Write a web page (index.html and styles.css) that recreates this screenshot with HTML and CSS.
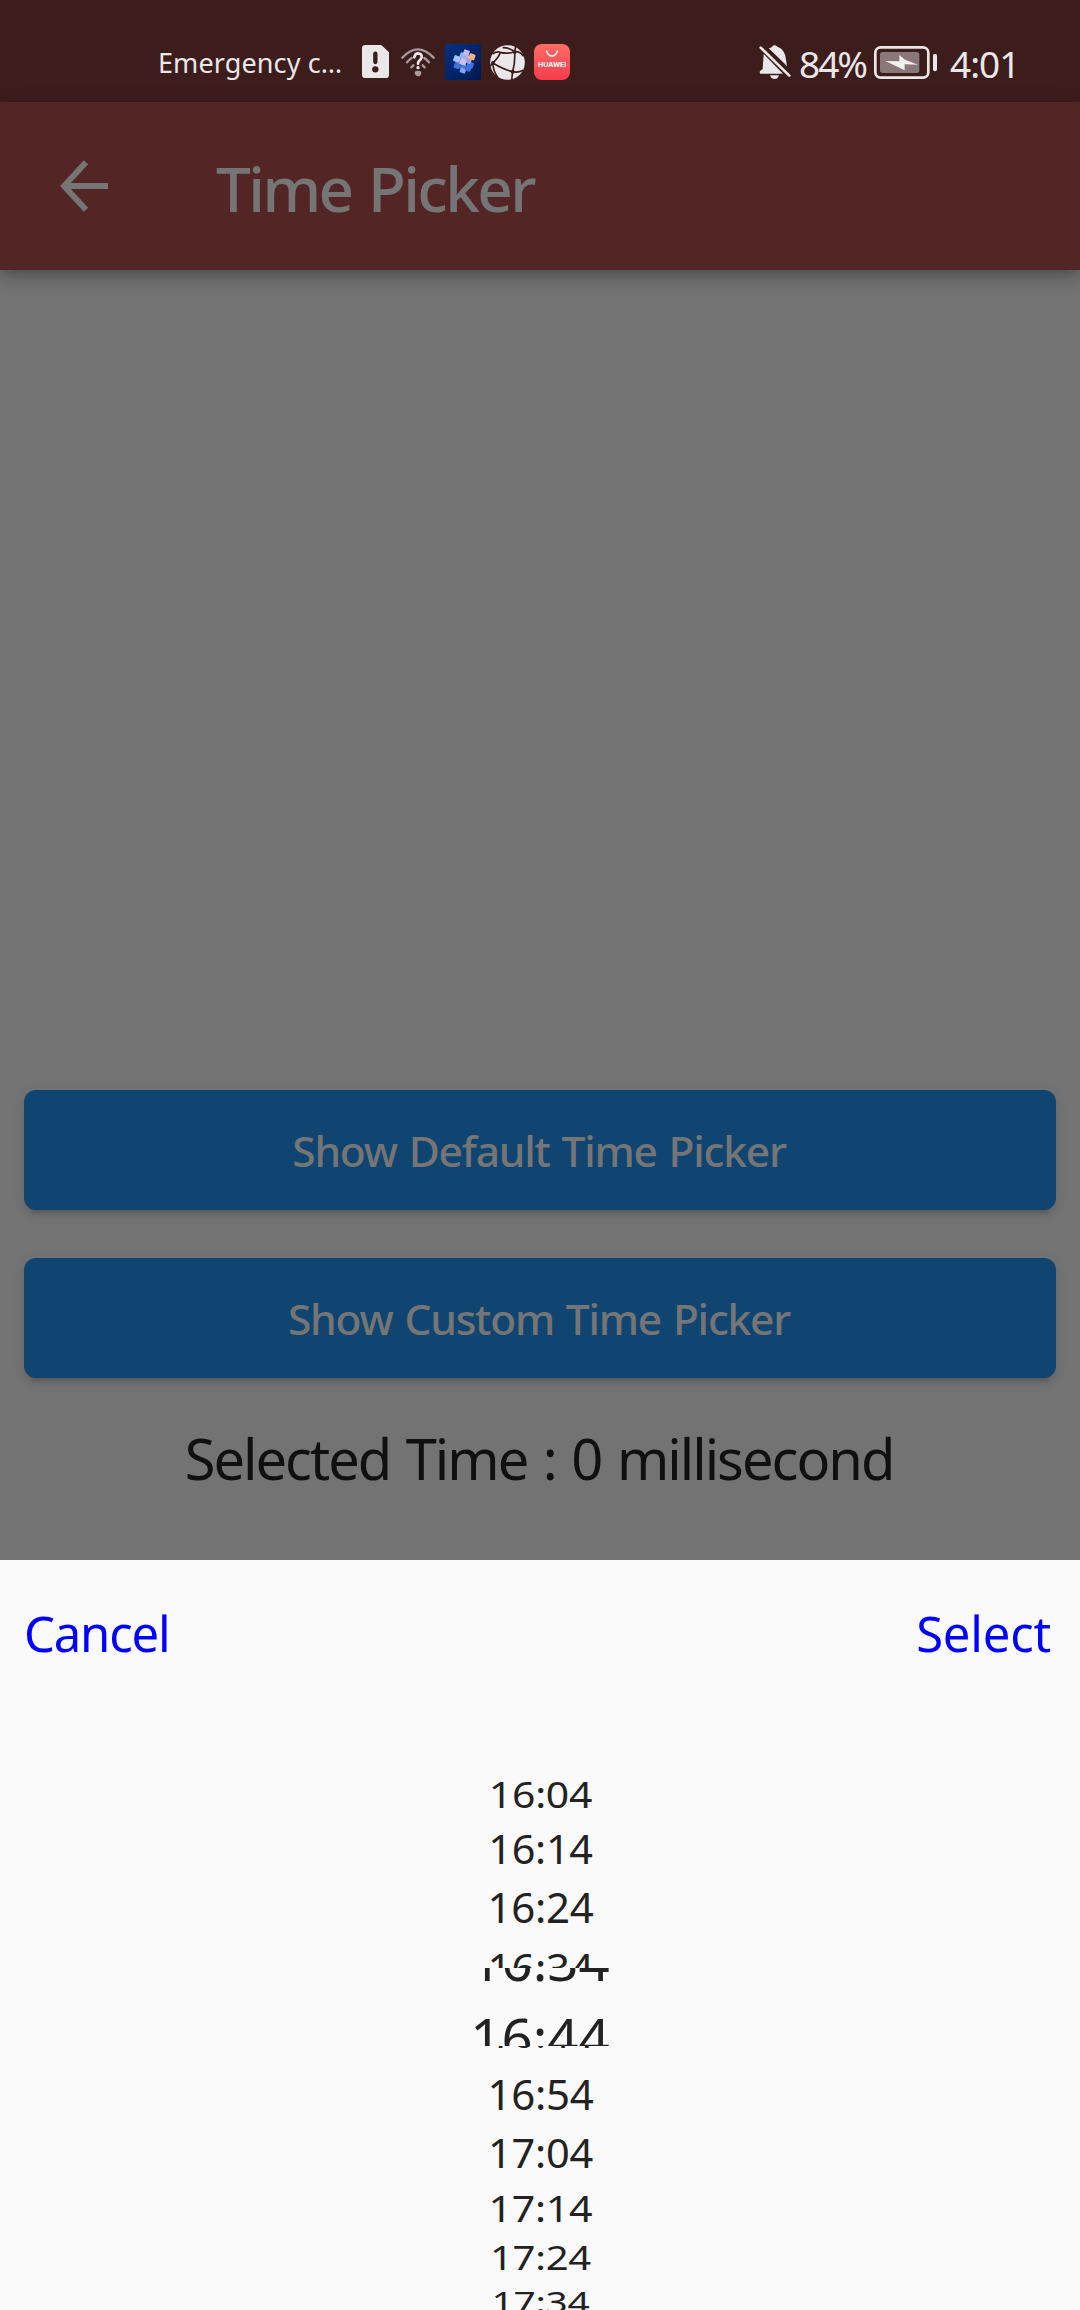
FILE: index.html
```
<!DOCTYPE html>
<html lang="en">
<head>
<meta charset="utf-8">
<title>Time Picker</title>
<link rel="stylesheet" href="styles.css">
</head>
<body>
<header class="status">
  <span class="carrier">Emergency c…</span>
  <div class="notifications">
    <svg class="sim" width="27" height="33" viewBox="0 0 81 99"><path fill="#e9e7e7" d="M10 0H58L81 22V89a10 10 0 0 1-10 10H10A10 10 0 0 1 0 89V10A10 10 0 0 1 10 0Z"/><path stroke="#3d1c1c" stroke-width="13" stroke-linecap="round" d="M40 26V51"/><circle cx="40" cy="73" r="9.500" fill="#3d1c1c"/></svg>
    <svg class="wifi" width="34" height="30" viewBox="0 0 102 90" fill="none" stroke-linecap="round"><g stroke="#a89b9b" stroke-width="7"><path d="M4 32Q50-18 98 32M18 46Q22 40 32 33M84 46Q80 40 70 33M31 61L37 55M71 61L65 55"/></g><path stroke="#e9e7e7" stroke-width="8" d="M40 31Q42 19 51 19Q63 20 62 31Q61 37 55 41Q51 45 51 50"/><circle cx="51" cy="62" r="5" fill="#e9e7e7"/><path fill="#a89b9b" d="M41 74Q51 68 61 74Q61 88 51 88Q41 87 41 74Z"/></svg>
    <svg class="app" width="36" height="36" viewBox="0 0 108 108"><defs><linearGradient id="navy" x2="1" y2="1"><stop stop-color="#033083"/><stop offset="1" stop-color="#00194e"/></linearGradient></defs><path fill="url(#navy)" d="M0 0H108V108H0Z"/><g transform="rotate(20 54 54)"><g fill="#4372dd"><rect x="32" y="61" width="18" height="18" rx="3"/><rect x="50" y="58" width="18" height="18" rx="3"/><rect x="54" y="71" width="17" height="15" rx="3" fill="#7ba4f5"/><rect x="68" y="46" width="19" height="18" rx="3"/><rect x="68" y="60" width="16" height="15" rx="3"/></g><rect x="24" y="42" width="20" height="19" rx="3" fill="#a3c3ff"/><rect x="38" y="28" width="19" height="18" rx="3" fill="#8fb4fa"/><rect x="44" y="44" width="20" height="19" rx="3" fill="#cdbdf2"/><rect x="55" y="30" width="16" height="16" rx="3" fill="#b4aee8"/><rect x="62" y="38" width="15" height="15" rx="3" fill="#9ca2e8"/><rect x="65" y="21" width="18" height="18" rx="3" fill="#ffb36e"/><rect x="45" y="16" width="18" height="17" rx="3" fill="#c3b9ec"/></g></svg>
    <svg class="globe" width="35" height="35" viewBox="0 0 105 105"><circle cx="52.500" cy="52.500" r="52" fill="#e9e7e7"/><g fill="none" stroke="#3d1c1c" stroke-width="5"><path d="M38 8Q60 8 74 20Q76 50 68 80Q44 75 8 54M7 27Q20 18 31 22Q50 28 74 20Q90 18 101 34M31 22Q25 40 8 54L0 64M8 54Q10 80 24 98M68 80Q84 84 100 76M74 20L77 4M68 80L65 105"/></g><g fill="#3d1c1c"><circle cx="74" cy="21" r="6"/><circle cx="68" cy="80" r="6"/><circle cx="9" cy="54" r="6"/></g></svg>
    <svg class="gallery" width="36" height="36" viewBox="0 0 108 108"><defs><linearGradient id="coral" x2="0" y2="1"><stop stop-color="#ff6d64"/><stop offset="1" stop-color="#f43c4c"/></linearGradient></defs><rect width="108" height="108" rx="23" fill="url(#coral)"/><path fill="none" stroke="#fff" stroke-width="4" stroke-linecap="round" d="M38 21Q42 36 54 36Q66 36 70 21"/><text x="12" y="69" textLength="85" lengthAdjust="spacingAndGlyphs" class="brand">HUAWEI</text></svg>
  </div>
  <svg class="bell" width="33" height="35" viewBox="0 0 99 105"><path fill="#e9e7e7" d="M33 9Q37 8 39 5Q46-3 55 5Q79 13 81 44L84 63L29 10ZM14 27L72 86H4Q0 82 4 77L11 72ZM33 91H60Q58 102 47 102Q36 102 33 91Z"/><path stroke="#e9e7e7" stroke-width="8" stroke-linecap="round" d="M5 8L91 92"/><path stroke="#3d1c1c" stroke-width="5" d="M20 11L86 75"/></svg>
  <span class="level">84%</span>
  <svg class="battery" width="64" height="33" viewBox="0 0 192 99"><rect x="4" y="4" width="159" height="91" rx="16" fill="none" stroke="#e9e7e7" stroke-width="8"/><rect x="18" y="18" width="118" height="63" rx="8" fill="#8a7777"/><path fill="#f2f0f0" d="M34 45L76 46V27L93 41L132 56L92 55L92 73L72 63Z"/><rect x="177" y="23" width="12" height="53" rx="6" fill="#e9e7e7"/></svg>
  <span class="clock">4:01</span>
</header>
<nav class="appbar">
  <svg class="back" width="48" height="52" viewBox="0 0 48 52"><path fill="none" stroke="#757575" stroke-width="6" d="M26 2.200L4 26L26 49.800M4 26H48"/></svg>
  <h1>Time Picker</h1>
</nav>
<main class="content">
  <button class="action default">Show Default Time Picker</button>
  <button class="action custom">Show Custom Time Picker</button>
  <p class="result">Selected Time : 0 millisecond</p>
</main>
<section class="sheet">
  <div class="toolbar"><span class="cancel">Cancel</span><span class="select">Select</span></div>
  <div class="wheel">
    <div class="row r1"><span>16:04</span></div>
    <div class="row r2"><span>16:14</span></div>
    <div class="row r3"><span>16:24</span></div>
    <div class="row r4"><span>16:34</span></div>
    <div class="row r5"><span>16:44</span></div>
    <div class="row r6"><span>16:54</span></div>
    <div class="row r7"><span>17:04</span></div>
    <div class="row r8"><span>17:14</span></div>
    <div class="row r9"><span>17:24</span></div>
    <div class="row r10"><span>17:34</span></div>
    <div class="lens"><div>16:34</div><div>16:44</div></div>
  </div>
</section>
</body>
</html>
```
FILE: styles.css
```
* { box-sizing: border-box; }
body {
  margin: 0;
  width: 1080px;
  height: 2310px;
  overflow: hidden;
  display: flex;
  flex-direction: column;
  background: #737373;
  font-family: "Noto Sans", "Open Sans", sans-serif;
}
svg { display: block; flex: none; }

.status {
  height: 102px;
  flex: none;
  display: flex;
  align-items: flex-start;
  background: #3d1c1c;
  color: #e9e7e7;
  white-space: nowrap;
}
.carrier {
  width: 204px;
  margin-left: 158px;
  padding-top: 43px;
  font-size: 27px;
  line-height: 40px;
  letter-spacing: 0.1px;
}
.notifications { display: flex; width: 397px; }
.sim { margin-top: 45px; }
.wifi { margin: 47px 0 0 12px; }
.app { margin: 44px 0 0 10px; }
.globe { margin: 45px 0 0 9px; }
.gallery { margin: 44px 0 0 9px; }
.brand { fill: #fff; font: bold 18px Inter, sans-serif; }
.bell { margin-top: 45px; }
.level, .clock { font-size: 37px; line-height: 50px; padding-top: 39px; }
.level { width: 75px; margin-left: 7px; letter-spacing: -2px; }
.battery { margin-top: 46px; }
.clock { margin-left: 12px; letter-spacing: -1px; }

.appbar {
  position: relative;
  height: 168px;
  flex: none;
  display: flex;
  align-items: flex-start;
  background: #532525;
  color: #757575;
  box-shadow: 0 6px 12px -3px rgba(0, 0, 0, .25), 0 12px 15px rgba(0, 0, 0, .08), 0 3px 24px rgba(0, 0, 0, .07);
}
.back { margin: 58px 0 0 60px; }
h1 {
  margin: 44px 0 0 108px;
  font-size: 62px;
  line-height: 84px;
  font-weight: 500;
  letter-spacing: -2.6px;
  word-spacing: 3px;
}

.content {
  height: 1290px;
  flex: none;
  display: flex;
  flex-direction: column;
  align-items: stretch;
  padding: 820px 24px 0;
}
.action {
  height: 120px;
  flex: none;
  border: 0;
  border-radius: 12px;
  padding: 1px 2px 0 0;
  background: #104571;
  color: #757575;
  font-family: inherit;
  font-size: 42.5px;
  font-weight: 500;
  letter-spacing: -1.2px;
  word-spacing: 2px;
  box-shadow: 0 9px 3px -6px rgba(0, 0, 0, .1), 0 6px 6px rgba(0, 0, 0, .07), 0 3px 15px rgba(0, 0, 0, .06);
}
.custom { margin-top: 48px; }
.result {
  margin: 38px 0 0;
  padding-right: 2px;
  text-align: center;
  color: #101010;
  font-size: 56px;
  line-height: 84px;
  letter-spacing: -2px;
  word-spacing: 3px;
}

.sheet {
  height: 750px;
  flex: none;
  overflow: hidden;
  background: #fafafa;
  color: #222;
}
.toolbar {
  height: 150px;
  display: flex;
  justify-content: space-between;
  padding: 39px 29px 0 24px;
  color: #00f;
  font-size: 49px;
  line-height: 68px;
}
.cancel { letter-spacing: -1.2px; }
.select { letter-spacing: -.2px; }

.wheel {
  position: relative;
  height: 609px;
  padding-top: 57px;
  font-size: 42px;
}
.row {
  display: flex;
  align-items: center;
  justify-content: center;
}
.row span { line-height: 44px; margin: -6px 0 -6px 1px; letter-spacing: -.3px; }
.r1 { height: 54px; transform: scale(.975, .87); }
.r2 { height: 54px; transform: translateY(1px) scale(.985, .94); }
.r3 { height: 64px; }
.r4 { height: 58px; }
.r5 { height: 70px; }
.r6 { height: 52px; transform: translateY(1px); }
.r7 { height: 67px; transform: scale(.99, .96); }
.r8 { height: 44px; transform: scale(.98, .88); }
.r9 { height: 55px; transform: scale(.955, .77); }
.r10 { height: 33px; transform: scale(.925, .68); }
/* The magnifier covers the selected band of the wheel. */
.lens {
  position: absolute;
  top: 258px;
  left: 0;
  right: 0;
  height: 78px;
  overflow: hidden;
  background: #fafafa;
  font-size: 54.6px;
  line-height: 77px;
  text-align: center;
}
.lens div { height: 77px; }
.lens div:first-child { margin-top: -46px; }
```
